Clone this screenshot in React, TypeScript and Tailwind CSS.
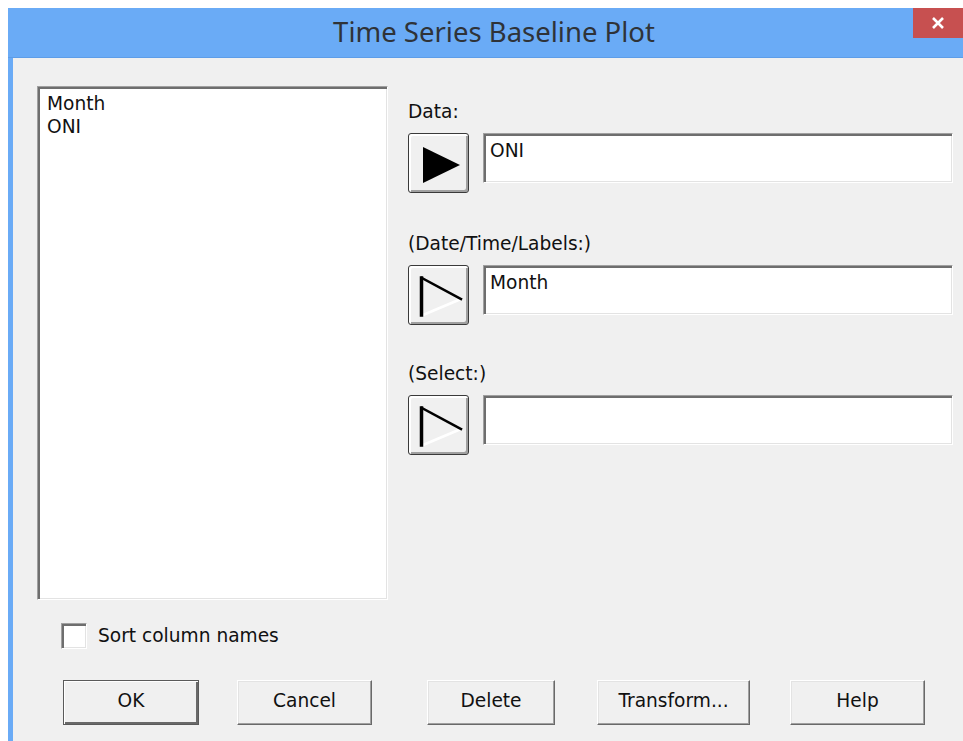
import type { ReactNode } from "react";

const sunken =
  "border border-t-[#a0a0a0] border-l-[#a0a0a0] border-b-white border-r-white shadow-[inset_2px_2px_0_#6e6e6e,inset_-1px_-1px_0_#e3e3e3]";

function PickButton({ filled }: { filled?: boolean }) {
  return (
    <button className="w-[61px] h-[60px] shrink-0 rounded-[3px] border border-[#3a3a3a] bg-[#f0f0f0] shadow-[inset_2px_2px_0_#ffffff,inset_-2px_-2px_0_#a0a0a0]">
      <svg width="61" height="60" viewBox="0 0 61 60" className="-m-px block">
        {filled ? (
          <polygon points="15,14 52,32 15,50" fill="#000" />
        ) : (
          <g strokeLinecap="square">
            <line x1="15" y1="50" x2="53" y2="34" stroke="#ffffff" strokeWidth="2.5" />
            <line x1="14" y1="13" x2="53" y2="34" stroke="#000" strokeWidth="2.5" />
            <line x1="13.5" y1="13" x2="13.5" y2="50" stroke="#000" strokeWidth="3.5" />
          </g>
        )}
      </svg>
    </button>
  );
}

function Field({ label, value, filled }: { label: string; value: string; filled?: boolean }) {
  return (
    <div className="flex flex-col">
      <div className="leading-[22px]">{label}</div>
      <div className="mt-[10px] flex items-start gap-[14px]">
        <PickButton filled={filled} />
        <div className={`flex-1 h-[50px] bg-white px-[6px] pt-[6px] leading-[22px] ${sunken}`}>
          {value}
        </div>
      </div>
    </div>
  );
}

function PushButton({ children, w, isDefault }: { children: ReactNode; w: string; isDefault?: boolean }) {
  const frame = isDefault
    ? "border border-[#5a5a5a] shadow-[inset_1px_1px_0_#ffffff,inset_-2px_-2px_0_#696969]"
    : "border border-t-white border-l-white border-b-[#696969] border-r-[#696969] shadow-[inset_-1px_-1px_0_#a0a0a0,inset_1px_1px_0_#e3e3e3]";
  return (
    <button className={`${w} h-[45px] bg-[#f0f0f0] pb-[3px] leading-[22px] text-[#111] ${frame}`}>
      {children}
    </button>
  );
}

export default function App() {
  return (
    <div
      className="w-[963px] h-[741px] overflow-hidden bg-white pt-[8px] pl-[8px] text-[18.6px] text-[#111]"
      style={{ fontFamily: '"DejaVu Sans", sans-serif' }}
    >
      <div className="flex h-[733px] flex-col bg-[#6aabf6]">
        {/* title bar */}
        <div className="flex h-[50px] border-b border-[#5d9de8]">
          <div
            className="flex-1 pl-[67px] pt-[7px] text-center text-[27.5px] leading-[34px] text-[#2f3338]"
            style={{ fontFamily: '"Noto Sans", "Open Sans", sans-serif' }}
          >
            Time Series Baseline Plot
          </div>
          <div className="flex h-[30px] w-[50px] items-center justify-center bg-[#c75050]">
            <svg width="14" height="14" viewBox="0 0 14 14">
              <path d="M2 2 L12 12 M12 2 L2 12" stroke="#fff" strokeWidth="2.6" />
            </svg>
          </div>
        </div>

        {/* dialog body */}
        <div className="flex-1 pl-[5px]">
          <div className="flex h-full flex-col bg-[#f0f0f0] pl-[24px] pt-[28px]">
            <div className="flex">
              <div className={`w-[351px] h-[514px] shrink-0 bg-white pl-[9px] pt-[5px] leading-[23px] ${sunken}`}>
                <div>Month</div>
                <div>ONI</div>
              </div>
              <div className="ml-[20px] mr-[10px] flex flex-1 flex-col pt-[15px]">
                <Field label="Data:" value="ONI" filled />
                <div className="mt-[40px]">
                  <Field label="(Date/Time/Labels:)" value="Month" />
                </div>
                <div className="mt-[38px]">
                  <Field label="(Select:)" value="" />
                </div>
              </div>
            </div>

            <div className="mt-[23px] ml-[24px] flex items-center gap-[11px]">
              <div className={`h-[26px] w-[26px] bg-white ${sunken}`} />
              <span className="leading-[22px]">Sort column names</span>
            </div>

            <div className="mt-[31px] ml-[26px] flex">
              <PushButton w="w-[136px]" isDefault>
                OK
              </PushButton>
              <div className="ml-[38px]">
                <PushButton w="w-[135px]">Cancel</PushButton>
              </div>
              <div className="ml-[55px]">
                <PushButton w="w-[128px]">Delete</PushButton>
              </div>
              <div className="ml-[42px]">
                <PushButton w="w-[153px]">Transform...</PushButton>
              </div>
              <div className="ml-[40px]">
                <PushButton w="w-[135px]">Help</PushButton>
              </div>
            </div>
          </div>
        </div>
      </div>
    </div>
  );
}
